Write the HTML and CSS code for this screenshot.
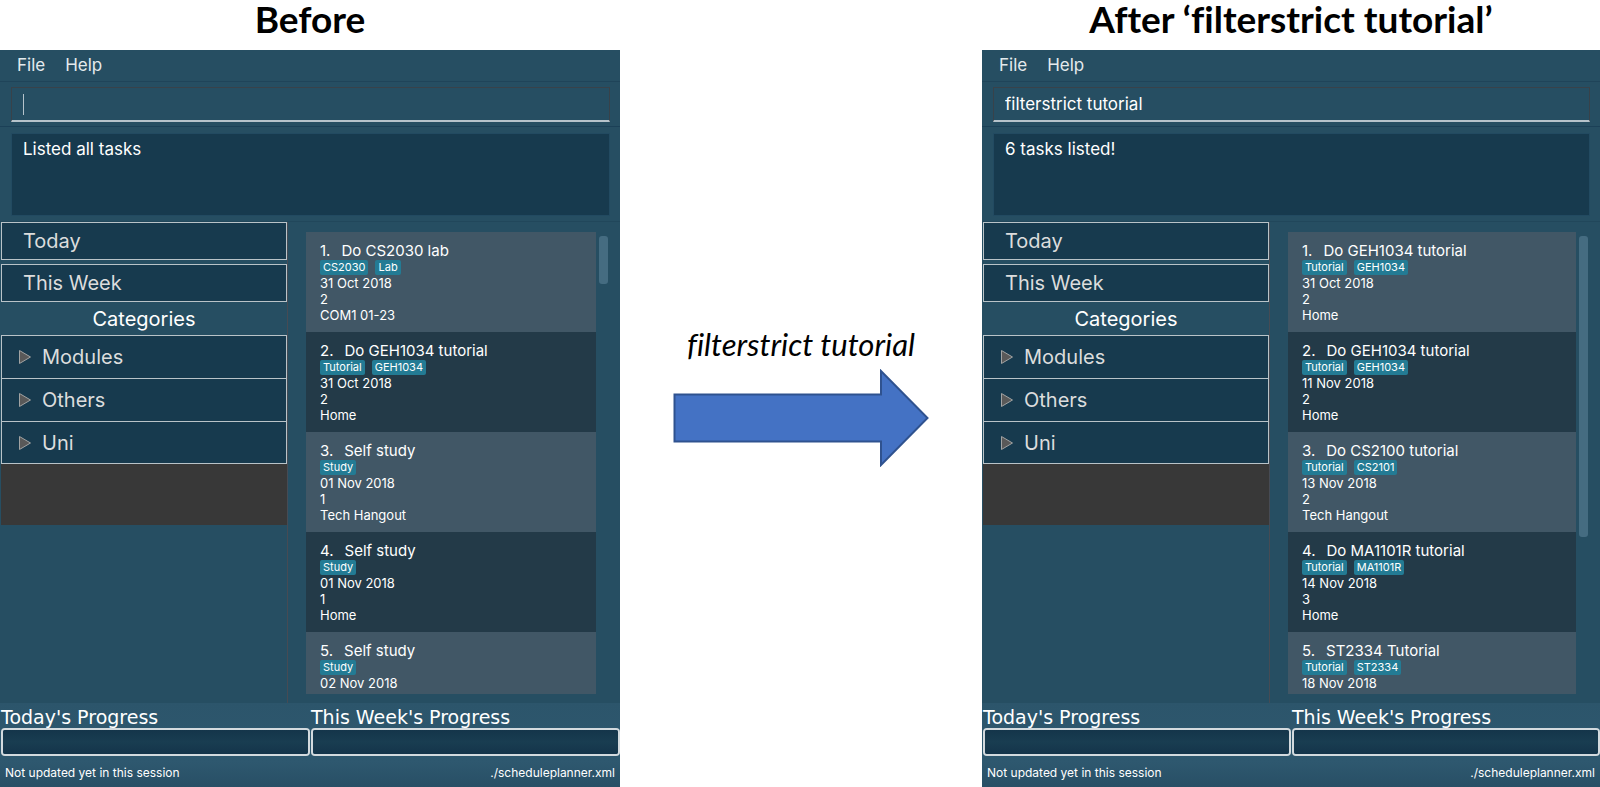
FILE: index.html
```html
<!DOCTYPE html>
<html lang="en">
<head>
<meta charset="utf-8">
<title>Schedule Planner: filterstrict</title>
<link rel="stylesheet" href="styles.css">
</head>
<body>
<main class="compare">
  <section class="side">
    <h1 class="heading">Before</h1>
    <div class="window">
      <nav class="menubar"><button type="button">File</button><button type="button">Help</button></nav>
      <div class="command"><input class="command-box is-focused" type="text" aria-label="Command"></div>
      <div class="result"><output class="result-box">Listed all tasks</output></div>
      <div class="content">
        <aside class="sidebar">
          <button class="nav-button" type="button">Today</button>
          <button class="nav-button" type="button">This Week</button>
          <h2 class="sidebar-title">Categories</h2>
          <div class="tree">
            <button type="button"><svg viewBox="0 0 12 14"><path d="M.5 .5 11.500 7 .5 13.500Z"/></svg>Modules</button>
            <button type="button"><svg viewBox="0 0 12 14"><path d="M.5 .5 11.500 7 .5 13.500Z"/></svg>Others</button>
            <button type="button"><svg viewBox="0 0 12 14"><path d="M.5 .5 11.500 7 .5 13.500Z"/></svg>Uni</button>
          </div>
        </aside>
        <div class="tasks">
          <ol class="task-list">
            <li><h3><span>1.</span>Do CS2030 lab</h3><div class="tags"><span>CS2030</span><span>Lab</span></div><p>31 Oct 2018</p><p>2</p><p>COM1 01-23</p></li>
            <li><h3><span>2.</span>Do GEH1034 tutorial</h3><div class="tags"><span>Tutorial</span><span>GEH1034</span></div><p>31 Oct 2018</p><p>2</p><p>Home</p></li>
            <li><h3><span>3.</span>Self study</h3><div class="tags"><span>Study</span></div><p>01 Nov 2018</p><p>1</p><p>Tech Hangout</p></li>
            <li><h3><span>4.</span>Self study</h3><div class="tags"><span>Study</span></div><p>01 Nov 2018</p><p>1</p><p>Home</p></li>
            <li><h3><span>5.</span>Self study</h3><div class="tags"><span>Study</span></div><p>02 Nov 2018</p></li>
          </ol>
          <div class="scrollbar"><div class="thumb thumb-short"></div></div>
        </div>
      </div>
      <footer class="footer">
        <div class="progress-row">
          <label>Today's Progress<progress value="0" max="1"></progress></label>
          <label>This Week's Progress<progress value="0" max="1"></progress></label>
        </div>
        <div class="status"><span>Not updated yet in this session</span><span>./scheduleplanner.xml</span></div>
      </footer>
    </div>
  </section>

  <section class="step">
    <p>filterstrict tutorial</p>
    <svg class="arrow" viewBox="0 0 256 98"><path d="M1.500 25.500H208V2L254.500 49 208 96V72.500H1.500Z"/></svg>
  </section>

  <section class="side">
    <h1 class="heading">After ‘filterstrict tutorial’</h1>
    <div class="window">
      <nav class="menubar"><button type="button">File</button><button type="button">Help</button></nav>
      <div class="command"><input class="command-box" type="text" aria-label="Command" value="filterstrict tutorial"></div>
      <div class="result"><output class="result-box">6 tasks listed!</output></div>
      <div class="content">
        <aside class="sidebar">
          <button class="nav-button" type="button">Today</button>
          <button class="nav-button" type="button">This Week</button>
          <h2 class="sidebar-title">Categories</h2>
          <div class="tree">
            <button type="button"><svg viewBox="0 0 12 14"><path d="M.5 .5 11.500 7 .5 13.500Z"/></svg>Modules</button>
            <button type="button"><svg viewBox="0 0 12 14"><path d="M.5 .5 11.500 7 .5 13.500Z"/></svg>Others</button>
            <button type="button"><svg viewBox="0 0 12 14"><path d="M.5 .5 11.500 7 .5 13.500Z"/></svg>Uni</button>
          </div>
        </aside>
        <div class="tasks">
          <ol class="task-list">
            <li><h3><span>1.</span>Do GEH1034 tutorial</h3><div class="tags"><span>Tutorial</span><span>GEH1034</span></div><p>31 Oct 2018</p><p>2</p><p>Home</p></li>
            <li><h3><span>2.</span>Do GEH1034 tutorial</h3><div class="tags"><span>Tutorial</span><span>GEH1034</span></div><p>11 Nov 2018</p><p>2</p><p>Home</p></li>
            <li><h3><span>3.</span>Do CS2100 tutorial</h3><div class="tags"><span>Tutorial</span><span>CS2101</span></div><p>13 Nov 2018</p><p>2</p><p>Tech Hangout</p></li>
            <li><h3><span>4.</span>Do MA1101R tutorial</h3><div class="tags"><span>Tutorial</span><span>MA1101R</span></div><p>14 Nov 2018</p><p>3</p><p>Home</p></li>
            <li><h3><span>5.</span>ST2334 Tutorial</h3><div class="tags"><span>Tutorial</span><span>ST2334</span></div><p>18 Nov 2018</p></li>
          </ol>
          <div class="scrollbar"><div class="thumb thumb-long"></div></div>
        </div>
      </div>
      <footer class="footer">
        <div class="progress-row">
          <label>Today's Progress<progress value="0" max="1"></progress></label>
          <label>This Week's Progress<progress value="0" max="1"></progress></label>
        </div>
        <div class="status"><span>Not updated yet in this session</span><span>./scheduleplanner.xml</span></div>
      </footer>
    </div>
  </section>
</main>
</body>
</html>
```
FILE: styles.css
```css
* { box-sizing: border-box; }
body, h1, h2, h3, p, ol { margin: 0; padding: 0; }
body { background: #fff; font-family: Inter, "Liberation Sans", sans-serif; }
button, input { font: inherit; color: inherit; margin: 0; border-radius: 0; }

.compare {
  display: grid;
  grid-template-columns: 620fr 362fr 618fr;
  height: 100vh;
}
.side { display: flex; flex-direction: column; min-width: 0; min-height: 0; }
.heading {
  height: 50px;
  font: 700 37px/38px Lato, sans-serif;
  font-variant-ligatures: none;
  text-align: center;
  color: #000;
}

.window {
  flex: 1;
  min-height: 0;
  display: flex;
  flex-direction: column;
  background: #264e62;
  color: #fff;
}
.menubar {
  height: 32px;
  display: flex;
  gap: 20px;
  padding: 0 17px;
  border-bottom: 1px solid #1f4459;
}
.menubar button {
  background: none;
  border: 0;
  padding: 0 0 1px;
  font-size: 17px;
  color: #e4eaed;
}
.command { padding: 5px 10px 4px 11px; border-bottom: 1px solid #1b4057; }
.command-box {
  display: block;
  width: 100%;
  height: 35px;
  padding: 0 11px;
  border: 1px solid #38424a;
  border-bottom: 2px solid #b6c3cb;
  background: none;
  font-size: 17px;
  outline: 0;
}
.is-focused { background: linear-gradient(#b5c3cb, #b5c3cb) 11px 6px / 1px 21px no-repeat; }
.result { padding: 6px 10px 5px 11px; border-bottom: 1px solid #21475b; }
.result-box {
  display: block;
  height: 83px;
  padding: 5px 11px;
  border: 1px solid #224a61;
  background: #173a4e;
  font-size: 17px;
  line-height: 20px;
}

.content { flex: 1; min-height: 0; display: flex; }
.sidebar {
  flex: 0 1 288px;
  display: flex;
  flex-direction: column;
  padding-left: 1px;
  border-right: 1px solid #464b54;
}
.nav-button {
  height: 38px;
  margin-bottom: 4px;
  padding: 0 21px;
  border: 1px solid #b9c3c8;
  background: #173a4e;
  color: #dcdddd;
  font-size: 20px;
  text-align: left;
}
.sidebar-title {
  height: 29px;
  font-size: 20px;
  font-weight: 400;
  line-height: 26px;
  text-align: center;
}
.tree { height: 190px; background: #383838; }
.tree button {
  display: flex;
  align-items: center;
  gap: 11px;
  width: 100%;
  height: 43px;
  padding: 0 17px;
  border: 1px solid #b9c3c8;
  border-bottom: 0;
  background: #173a4e;
  color: #dcdddd;
  font-size: 20px;
}
.tree button:last-child { border-bottom: 1px solid #b9c3c8; }
.tree svg { width: 12px; height: 14px; fill: #595959; stroke: #a1a3a3; stroke-width: 1; }

.tasks {
  flex: 1;
  display: flex;
  gap: 3px;
  min-width: 0;
  padding: 10px 12px 9px 18px;
}
.task-list { flex: 1; min-width: 0; overflow: hidden; list-style: none; }
.task-list li {
  height: 100px;
  padding: 9px 14px;
  background: #415766;
  font-size: 13px;
  line-height: 16px;
}
.task-list li:nth-child(even) { background: #233a48; }
.task-list h3 { font-size: 15px; font-weight: 400; line-height: 19px; }
.task-list h3 span { margin-right: 11px; }
.tags { display: flex; gap: 7px; height: 15px; }
.tags span {
  padding: 0 3px;
  border-radius: 2px;
  background: #237b94;
  font-size: 11px;
  line-height: 15px;
}
.scrollbar { width: 9px; padding-top: 4px; }
.thumb { border-radius: 3px; background: #456c81; }
.thumb-short { height: 48px; }
.thumb-long { height: 301px; }

.footer { background: linear-gradient(#2c556b, #2e586f 70%, #284f65); }
.progress-row { display: flex; }
.progress-row label {
  flex: 1;
  padding-left: 1px;
  font: 19px/28px "DejaVu Sans", sans-serif;
}
progress {
  display: block;
  appearance: none;
  width: 100%;
  height: 28px;
  margin-top: -3px;
  border: 2px solid #d3dade;
  border-radius: 4px;
  overflow: hidden;
  background: #173a4e;
}
progress::-webkit-progress-bar { background: linear-gradient(#14354a, #193d51 50%, #14344a); }
.status {
  display: flex;
  justify-content: space-between;
  height: 31px;
  padding: 0 5px;
  font-size: 12px;
  line-height: 34px;
}

.step {
  display: flex;
  flex-direction: column;
  align-items: center;
  gap: 7px;
  padding: 326px 12px 0;
}
.step p {
  font: italic 31px/36px Lato, sans-serif;
  font-variant-ligatures: none;
  color: #000;
}
.arrow { width: 256px; fill: #4472c4; stroke: #2f528f; stroke-width: 2; }
```
